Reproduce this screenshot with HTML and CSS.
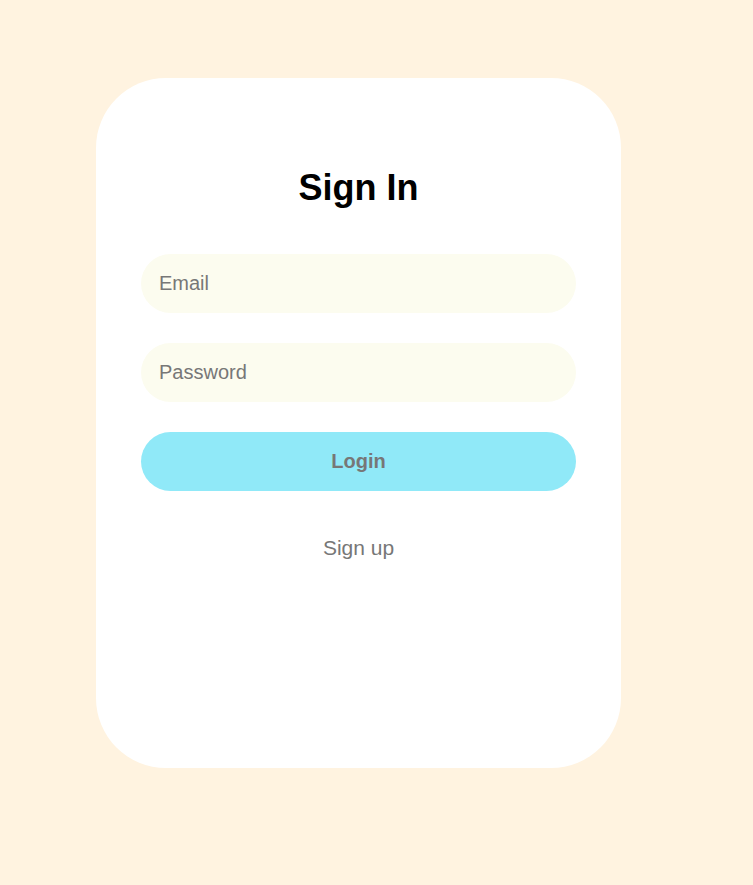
FILE: index.html
```html
<!DOCTYPE html>
<html lang="en">
<head>
<meta charset="utf-8">
<title>Sign In</title>
<link rel="stylesheet" href="styles.css">
</head>
<body>
  <main class="page">
    <section class="card">
      <h1 class="title">Sign In</h1>
      <form class="form">
        <input class="field" type="email" placeholder="Email">
        <input class="field" type="password" placeholder="Password">
        <button class="btn" type="button">Login</button>
      </form>
      <a class="link" href="#">Sign up</a>
    </section>
  </main>
</body>
</html>
```

FILE: styles.css
```css
* { box-sizing: border-box; }
html, body {
  margin: 0;
  padding: 0;
  background: #fff3e0;
  font-family: "Liberation Sans", Arial, sans-serif;
}
.page {
  padding: 78px 0 0 96px;
  min-height: 885px;
}
.card {
  width: 525px;
  height: 690px;
  background: #ffffff;
  border-radius: 70px;
  padding: 89px 45px 0;
  display: flex;
  flex-direction: column;
  align-items: stretch;
}
.title {
  margin: 0 0 46px;
  font-size: 36px;
  line-height: 41px;
  font-weight: 700;
  color: #000;
  text-align: center;
}
.form {
  display: flex;
  flex-direction: column;
  gap: 30.5px;
}
.field {
  height: 58.7px;
  border: none;
  outline: none;
  border-radius: 30px;
  background: #fcfcef;
  padding: 0 18px;
  font-family: inherit;
  font-size: 20px;
  color: #777;
}
.field::placeholder { color: #777; opacity: 1; }
.btn {
  height: 58.7px;
  border: none;
  border-radius: 30px;
  background: #90e9f8;
  font-family: inherit;
  font-size: 20px;
  font-weight: 700;
  color: #777;
  cursor: pointer;
}
.link {
  margin-top: 45px;
  align-self: center;
  font-size: 21px;
  line-height: 24px;
  color: #777;
  text-decoration: none;
}
```
